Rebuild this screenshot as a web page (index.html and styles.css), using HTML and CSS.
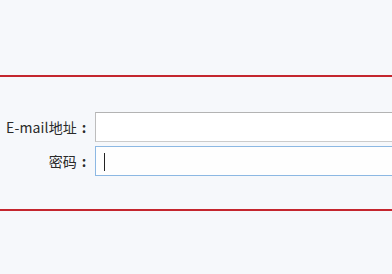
FILE: index.html
```html
<!DOCTYPE html>
<html lang="zh-CN">
<head>
<meta charset="utf-8">
<title>登录</title>
<link rel="stylesheet" href="styles.css">
</head>
<body>
<div class="page">
  <form class="panel">
    <div class="row">
      <label class="label" for="email">E-mail地址<span class="colon">:</span></label>
      <input class="field" id="email" type="text">
    </div>
    <div class="row">
      <label class="label" for="pwd">密码<span class="colon">:</span></label>
      <div class="field-wrap">
        <input class="field focused" id="pwd" type="password">
        <span class="caret"></span>
      </div>
    </div>
  </form>
</div>
</body>
</html>
```
FILE: styles.css
```css
html, body {
  margin: 0;
  padding: 0;
  background: #f6f8fb;
}
body {
  font-family: "Noto Sans CJK SC", "Noto Sans", sans-serif;
  font-size: 14px;
  color: #2a2a2a;
  overflow: hidden;
}
.page {
  padding-top: 75px;
  width: 392px;
  height: 274px;
  box-sizing: border-box;
}
.panel {
  border-top: 2px solid #c4262e;
  border-bottom: 2px solid #c4262e;
  padding: 35px 0 33px;
  display: flex;
  flex-direction: column;
  gap: 4px;
  width: 392px;
  overflow: hidden;
}
.row {
  display: flex;
  align-items: center;
}
.label {
  width: 95px;
  flex: none;
  text-align: right;
  padding-right: 4px;
  box-sizing: border-box;
  white-space: nowrap;
  letter-spacing: 0.15px;
}
.colon {
  display: inline-block;
  width: 14px;
  text-align: center;
  font-weight: bold;
}
.field, .field-wrap {
  flex: none;
  width: 320px;
}
.field-wrap {
  position: relative;
  display: flex;
}
.field {
  height: 30px;
  box-sizing: border-box;
  border: 1px solid #cbcbcb;
  border-top-color: #b3b3b3;
  border-left-color: #bdbdbd;
  background: #fff;
  margin: 0;
  padding: 0 6px;
  outline: none;
}
.field.focused {
  border-color: #8cb8e3;
  background: #fefefe;
}
.caret {
  position: absolute;
  left: 9px;
  top: 7px;
  width: 1px;
  height: 18px;
  background: #222;
}
```
